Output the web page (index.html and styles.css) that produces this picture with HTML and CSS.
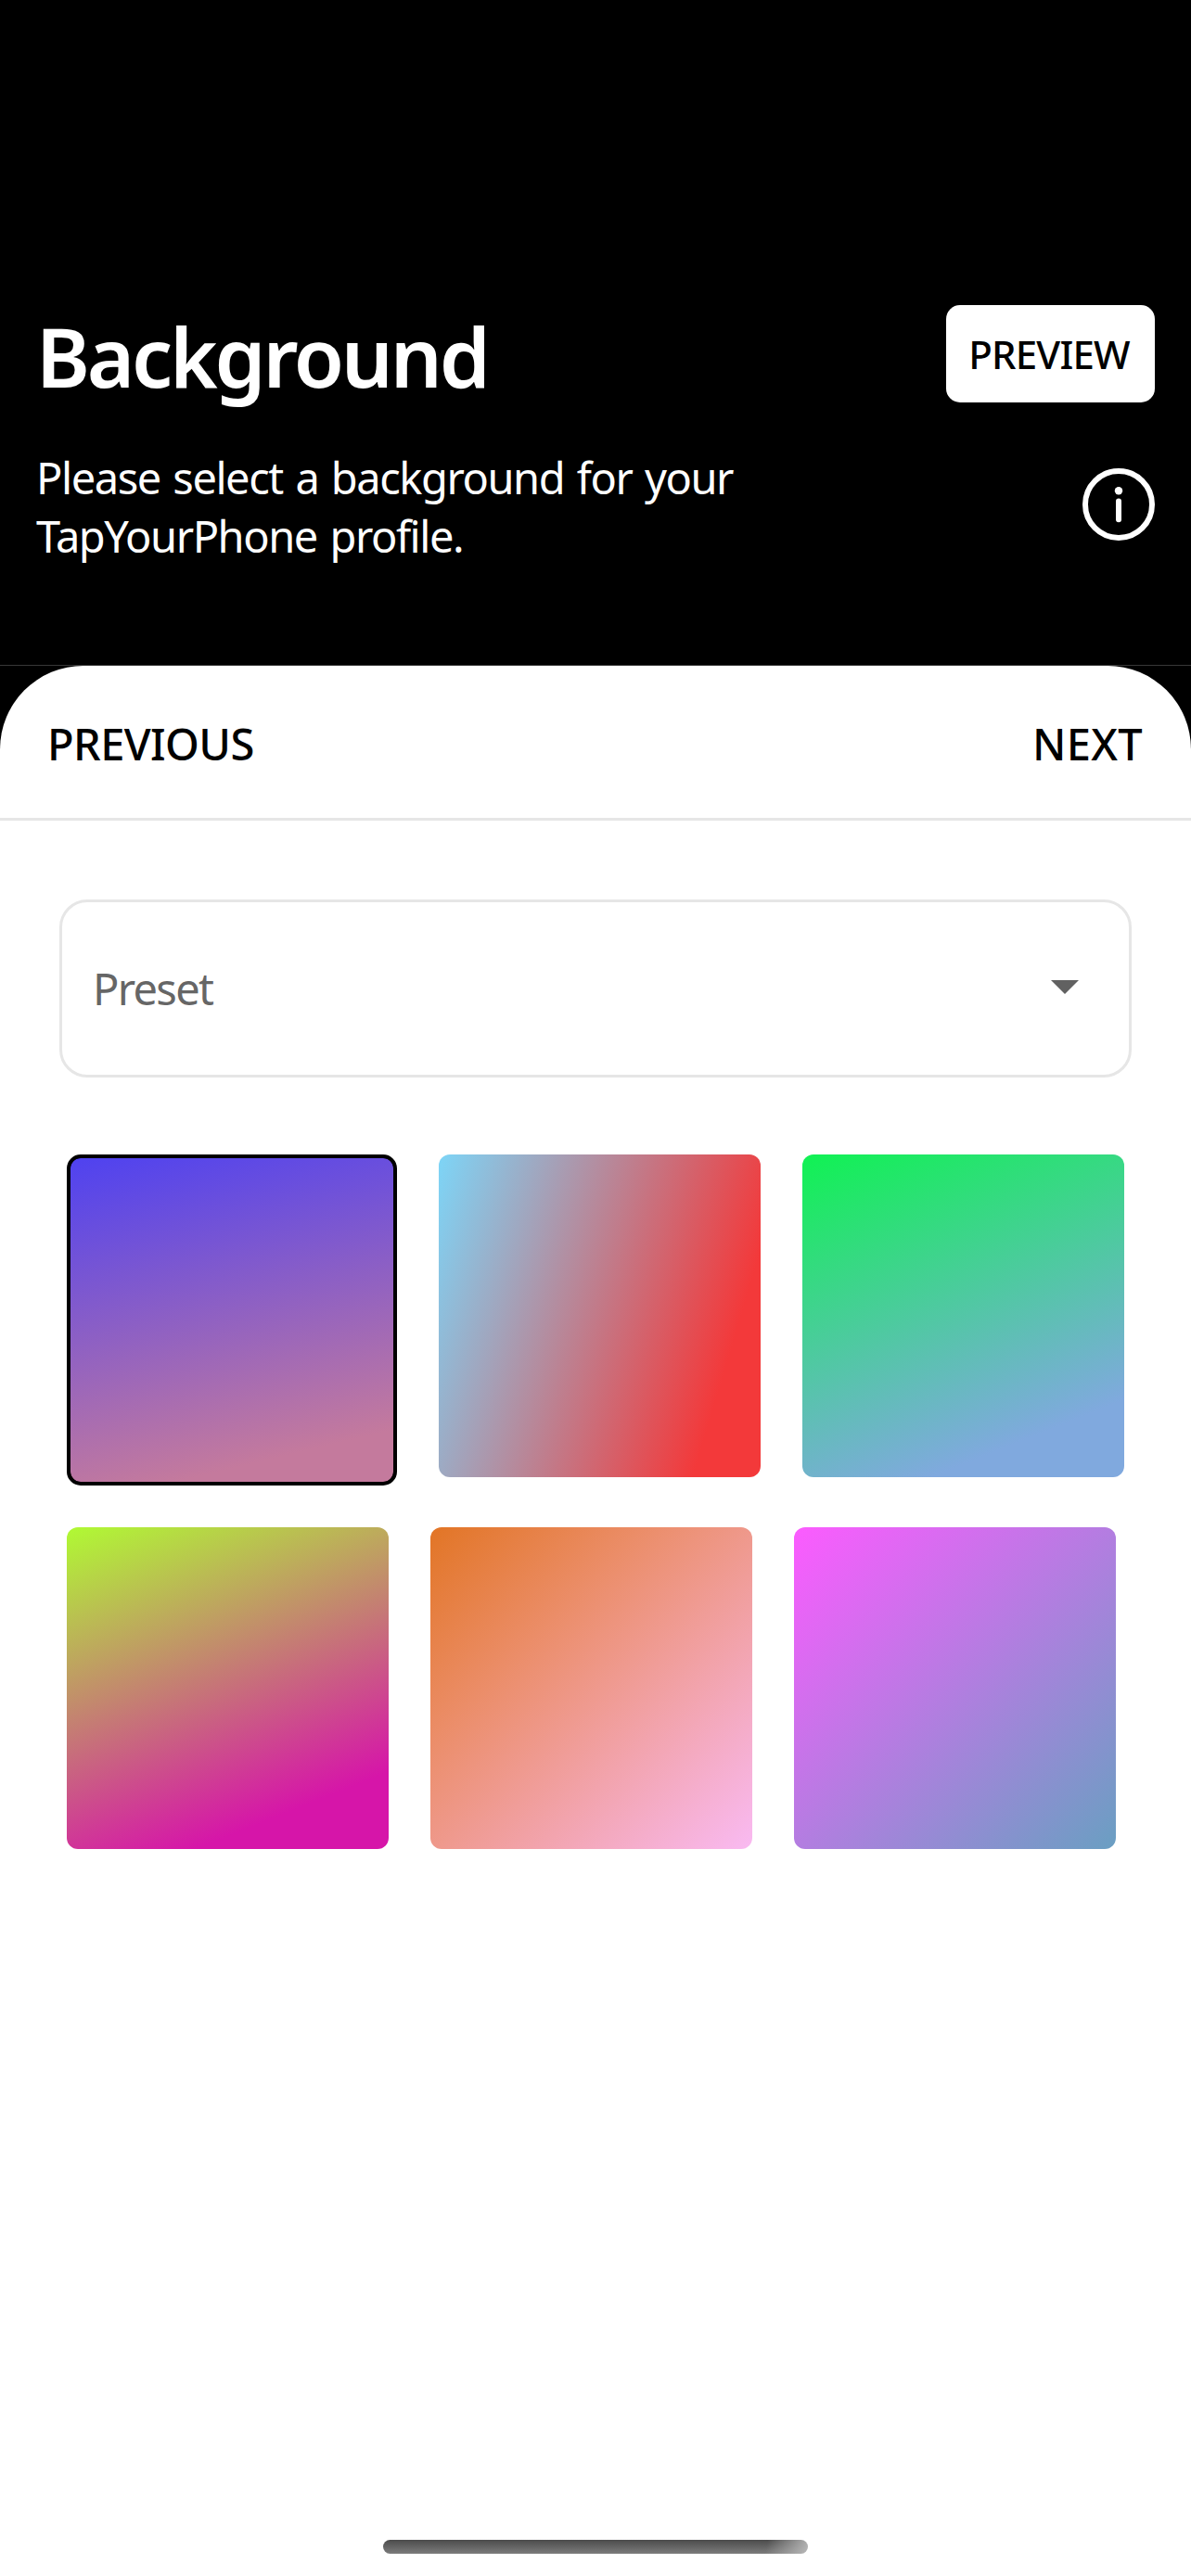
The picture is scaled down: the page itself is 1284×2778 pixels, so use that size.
FILE: index.html
```html
<!DOCTYPE html>
<html lang="en">
<head>
<meta charset="utf-8">
<title>Background</title>
<link rel="stylesheet" href="styles.css">
</head>
<body>
<div class="screen">
  <header class="header">
    <div class="header-text">
      <h1 class="title">Background</h1>
      <p class="intro">Please select a background for your TapYourPhone profile.</p>
    </div>
    <div class="header-actions">
      <button class="preview">PREVIEW</button>
      <svg class="info" viewBox="0 0 78 78" aria-label="Info">
        <circle cx="39" cy="39" r="36" fill="none" stroke="#fff" stroke-width="6"/>
        <circle cx="39" cy="24.3" r="4.2" fill="#fff"/>
        <path d="M39 35.5V55.3" stroke="#fff" stroke-width="6" stroke-linecap="round"/>
      </svg>
    </div>
  </header>
  <div class="sheet-wrap">
    <main class="sheet">
      <nav class="nav">
        <span class="previous">PREVIOUS</span>
        <span class="next">NEXT</span>
      </nav>
      <div class="select">
        <span class="select-label">Preset</span>
        <svg class="caret" viewBox="0 0 30 15"><path d="M0 0H30L15 15Z" fill="#616161"/></svg>
      </div>
      <div class="swatches">
        <div class="row">
          <div class="swatch indigo selected"></div>
          <div class="swatch sky"></div>
          <div class="swatch green"></div>
        </div>
        <div class="row">
          <div class="swatch lime"></div>
          <div class="swatch orange"></div>
          <div class="swatch pink"></div>
        </div>
      </div>
      <div class="home-indicator"></div>
    </main>
  </div>
</div>
</body>
</html>
```

FILE: styles.css
```css
* { box-sizing: border-box; }

body {
  margin: 0;
  background: #000;
  font-family: "Noto Sans", "Open Sans", sans-serif;
}

.screen {
  width: 1284px;
  height: 2778px;
  display: flex;
  flex-direction: column;
  overflow: hidden;
}

.header {
  height: 717px;
  padding: 329px 39px 0 39px;
  display: flex;
  justify-content: space-between;
  color: #fff;
}

.header-text { width: 800px; }

.title {
  margin: 0;
  font-size: 88px;
  line-height: 110px;
  font-weight: 600;
  letter-spacing: -3.2px;
}

.intro {
  margin: 45px 0 0;
  font-size: 47px;
  line-height: 63px;
  letter-spacing: -1.45px;
  word-spacing: 2.8px;
}

.header-actions {
  display: flex;
  flex-direction: column;
  align-items: flex-end;
  gap: 71px;
}

.preview {
  width: 225px;
  height: 105px;
  padding: 0 3px 0 0;
  border: 0;
  border-radius: 15px;
  background: #fff;
  color: #000;
  font-family: inherit;
  font-size: 42px;
  font-weight: 500;
  letter-spacing: -0.8px;
}

.info { width: 78px; height: 78px; display: block; }

.sheet-wrap {
  flex: 1;
  display: flex;
  border-top: 1px solid #383838;
}

.sheet {
  flex: 1;
  display: flex;
  flex-direction: column;
  border-radius: 90px 90px 0 0;
  background: #fff;
}

.nav {
  height: 167px;
  padding: 4px 52px 0 51px;
  display: flex;
  justify-content: space-between;
  align-items: center;
  border-bottom: 3px solid #e6e6e6;
  color: #000;
  font-size: 47px;
  font-weight: 500;
  letter-spacing: -0.6px;
}

.next { letter-spacing: 0.3px; }

.select {
  height: 192px;
  margin: 85px 64px 0;
  padding: 0 54px 0 33px;
  display: flex;
  justify-content: space-between;
  align-items: center;
  border: 3px solid #e6e6e6;
  border-radius: 30px;
  color: #666;
  font-size: 47px;
  letter-spacing: -1.7px;
}

.caret { width: 30px; height: 15px; margin-bottom: 3px; }

.swatches {
  margin: 83px 0 0 72px;
  display: flex;
  flex-direction: column;
  gap: 45px;
}

.row {
  display: flex;
  align-items: flex-start;
  gap: 45px;
}

.swatch {
  width: 347px;
  height: 347.5px;
  border-radius: 12px;
}

.selected {
  width: 356px;
  height: 356.5px;
  border: 4px solid #000;
  border-radius: 15px;
}

.indigo { background: linear-gradient(166.5deg, #4f42f0, #c47a9d 87%) padding-box, #000; }
.sky { background: linear-gradient(106.7deg, #7dd5f7, #f3393a 83.8%); }
.green { background: linear-gradient(158.2deg, #10f253, #80a9de 82.9%); }
.lime { background: linear-gradient(158.2deg, #b0fa33, #d615a9 82.9%); }
.orange { background: linear-gradient(135deg, #e27525, #eb8d68 33%, #f9baf2); }
.pink { background: linear-gradient(135deg, #fc5bff, #6a9fc2); }

.home-indicator {
  width: 458px;
  height: 15px;
  margin: auto auto 24px 413px;
  border-radius: 8px;
  background:
    linear-gradient(100deg, rgba(190, 190, 190, 0) 90%, rgba(190, 190, 190, 0.9)),
    linear-gradient(#4b4b4b, #7c7c7c);
}
```
